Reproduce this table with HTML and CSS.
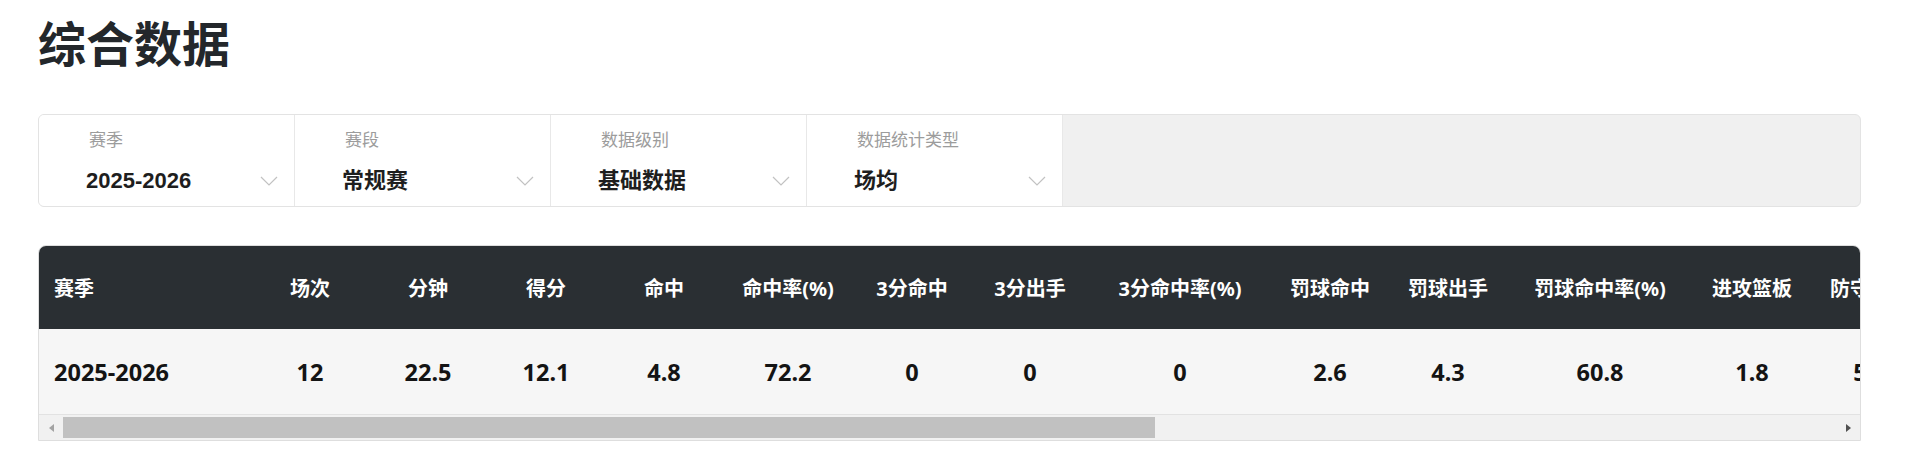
FILE: index.html
```html
<!DOCTYPE html>
<html lang="zh-CN">
<head>
<meta charset="utf-8">
<title>综合数据</title>
<link rel="stylesheet" href="styles.css">
</head>
<body>
<div class="page">
  <h1 class="title">综合数据</h1>

  <div class="filters">
    <div class="filter">
      <div class="filter-label">赛季</div>
      <div class="filter-value"><span>2025-2026</span><svg class="chev" viewBox="0 0 18 10"><path d="M1 1l8 8 8-8"/></svg></div>
    </div>
    <div class="filter">
      <div class="filter-label">赛段</div>
      <div class="filter-value"><span>常规赛</span><svg class="chev" viewBox="0 0 18 10"><path d="M1 1l8 8 8-8"/></svg></div>
    </div>
    <div class="filter">
      <div class="filter-label">数据级别</div>
      <div class="filter-value"><span>基础数据</span><svg class="chev" viewBox="0 0 18 10"><path d="M1 1l8 8 8-8"/></svg></div>
    </div>
    <div class="filter">
      <div class="filter-label">数据统计类型</div>
      <div class="filter-value"><span>场均</span><svg class="chev" viewBox="0 0 18 10"><path d="M1 1l8 8 8-8"/></svg></div>
    </div>
    <div class="filter-fill"></div>
  </div>

  <div class="stats">
    <div class="stats-scroll">
      <table class="stats-table">
        <colgroup>
          <col class="c-season">
          <col class="c-n"><col class="c-n"><col class="c-n"><col class="c-n">
          <col class="c-pct">
          <col class="c-n"><col class="c-n">
          <col class="c-pct3">
          <col class="c-n"><col class="c-n">
          <col class="c-pctft">
          <col class="c-n"><col class="c-n">
        </colgroup>
        <thead>
          <tr>
            <th class="season">赛季</th>
            <th>场次</th>
            <th>分钟</th>
            <th>得分</th>
            <th>命中</th>
            <th>命中率(%)</th>
            <th>3分命中</th>
            <th>3分出手</th>
            <th>3分命中率(%)</th>
            <th>罚球命中</th>
            <th>罚球出手</th>
            <th>罚球命中率(%)</th>
            <th>进攻篮板</th>
            <th>防守篮板</th>
          </tr>
        </thead>
        <tbody>
          <tr>
            <td class="season">2025-2026</td>
            <td>12</td>
            <td>22.5</td>
            <td>12.1</td>
            <td>4.8</td>
            <td>72.2</td>
            <td>0</td>
            <td>0</td>
            <td>0</td>
            <td>2.6</td>
            <td>4.3</td>
            <td>60.8</td>
            <td>1.8</td>
            <td>5.3</td>
          </tr>
        </tbody>
      </table>
    </div>
    <div class="hscroll">
      <div class="hs-btn"><span class="tri tri-left"></span></div>
      <div class="hs-track"><div class="hs-thumb" style="width:1092px"></div></div>
      <div class="hs-btn"><span class="tri tri-right"></span></div>
    </div>
  </div>
</div>
</body>
</html>
```

FILE: styles.css
```css
html, body {
  margin: 0;
  background: #ffffff;
}

body {
  font-family: "Noto Sans", "Noto Sans CJK SC", sans-serif;
}

.page {
  padding: 17px 60px 0 38px;
}

.title {
  margin: 0;
  font-family: "Noto Sans CJK SC", sans-serif;
  font-weight: 700;
  font-size: 48px;
  line-height: 48px;
  color: #23272b;
}

/* ---------- filter bar ---------- */
.filters {
  margin-top: 49px;
  display: flex;
  height: 93px;
  box-sizing: border-box;
  border: 1px solid #e3e3e3;
  border-radius: 6px;
  background: #f0f0f0;
  overflow: hidden;
}

.filter {
  width: 256px;
  flex: 0 0 256px;
  box-sizing: border-box;
  background: #ffffff;
  border-right: 1px solid #e8e8e8;
  padding: 14px 0 0 47px;
}

.filter-label {
  padding-left: 3px;
  font-family: "Liberation Sans", "Noto Sans CJK SC", sans-serif;
  font-size: 17px;
  line-height: 24px;
  color: #9c9c9c;
}

.filter-value {
  margin-top: 13px;
  display: flex;
  align-items: center;
  justify-content: space-between;
  padding-right: 16px;
  font-family: "Liberation Sans", "Noto Sans CJK SC", sans-serif;
  font-weight: 700;
  font-size: 22px;
  line-height: 30px;
  color: #1e1e1e;
}

.chev {
  width: 18px;
  height: 10px;
  fill: none;
  stroke: #c2c2c2;
  stroke-width: 1.2;
}

.filter-fill {
  flex: 1;
}

/* ---------- stats table ---------- */
.stats {
  margin-top: 38px;
  border: 1px solid #dedede;
  border-radius: 8px 8px 0 0;
  overflow: hidden;
}

.stats-scroll {
  overflow: hidden;
}

.stats-table {
  border-collapse: separate;
  border-spacing: 0;
  table-layout: fixed;
  width: 1890px;
}

.c-season { width: 212px; }
.c-n { width: 118px; }
.c-pct { width: 130px; }
.c-pct3 { width: 182px; }
.c-pctft { width: 186px; }

.stats-table th {
  height: 83px;
  padding: 0;
  background: #2a2f33;
  color: #ffffff;
  font-weight: 700;
  font-size: 20px;
  text-align: center;
  white-space: nowrap;
}

.stats-table td {
  height: 85px;
  padding: 0;
  background: #f6f6f6;
  border-bottom: 1px solid #e2e2e2;
  color: #141414;
  font-weight: 700;
  font-size: 23.5px;
  text-align: center;
  white-space: nowrap;
}

.stats-table .season {
  text-align: left;
  padding-left: 15px;
}

/* ---------- horizontal scrollbar ---------- */
.hscroll {
  display: flex;
  height: 25px;
  background: #f1f1f1;
}

.hs-btn {
  width: 24px;
  flex: 0 0 24px;
  display: flex;
  align-items: center;
  justify-content: center;
}

.hs-track {
  flex: 1;
  padding: 2px 0;
  box-sizing: border-box;
}

.hs-thumb {
  height: 100%;
  background: #c1c1c1;
}

.tri {
  width: 0;
  height: 0;
  border-top: 4px solid transparent;
  border-bottom: 4px solid transparent;
}

.tri-left {
  border-right: 5px solid #a3a3a3;
}

.tri-right {
  border-left: 5px solid #505050;
}
```
